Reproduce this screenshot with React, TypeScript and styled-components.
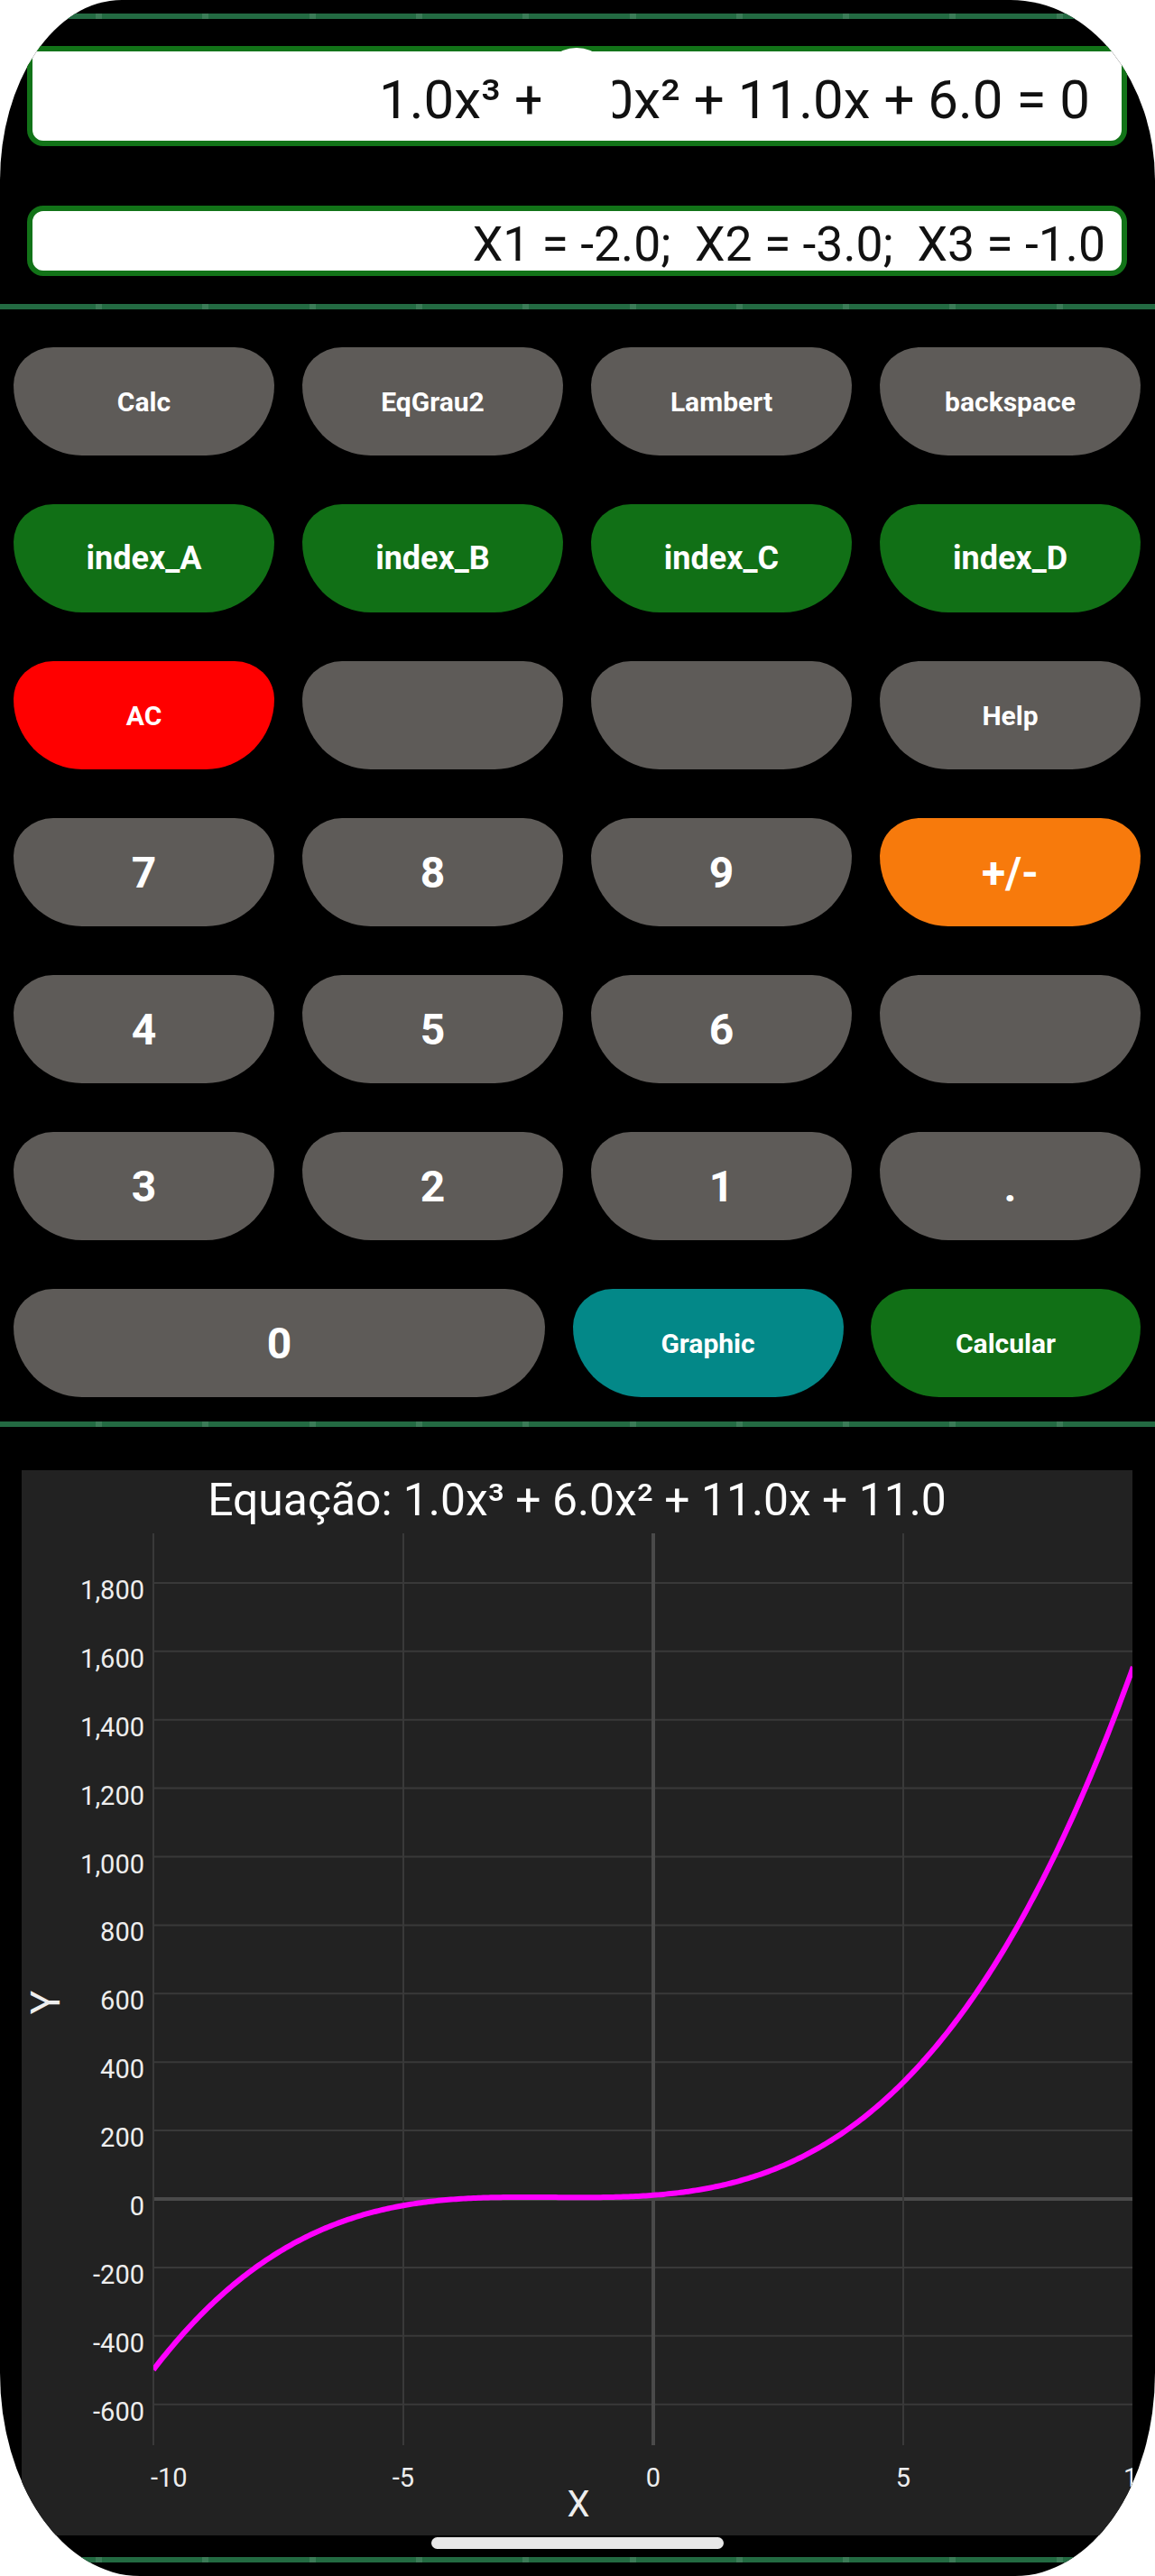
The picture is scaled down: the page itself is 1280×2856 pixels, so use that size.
import React from "react";
import styled, { createGlobalStyle } from "styled-components";

const Global = createGlobalStyle`
  html, body { margin: 0; padding: 0; background: #ffffff; }
  body { font-family: Roboto, "Liberation Sans", Arial, sans-serif; }
  * { box-sizing: border-box; }
`;

const Screen = styled.div`
  position: relative;
  width: 1280px;
  height: 2856px;
  background: #000;
  overflow: hidden;
  border-radius: 135px 160px 155px 155px / 200px 200px 225px 225px;
  display: flex;
  flex-direction: column;
`;

const Stripe = styled.div<{ $mt: number }>`
  flex: none;
  height: 6px;
  margin-top: ${(p) => p.$mt}px;
  background: repeating-linear-gradient(
    90deg,
    #236a42 0px,
    #236a42 106px,
    #3b7b57 106px,
    #3b7b57 113px,
    #236a42 113px,
    #236a42 118.3px
  );
`;

const StatusBar = styled.div`
  flex: none;
  height: 51px;
  display: flex;
  flex-direction: column;
`;

const EquationBox = styled.div`
  flex: none;
  margin: 0 31px 0 30px;
  height: 111px;
  background: #fff;
  border: 6px solid #127318;
  border-radius: 0 0 18px 18px;
  display: flex;
  align-items: center;
  justify-content: flex-end;
  padding: 7px 35px 0 0;
  font-size: 60px;
  color: #111;
  white-space: pre;
  overflow: hidden;
`;

const ResultBox = styled.div`
  flex: none;
  margin: 66px 31px 0 30px;
  height: 78px;
  background: #fff;
  border: 6px solid #127318;
  border-radius: 18px;
  display: flex;
  align-items: center;
  justify-content: flex-end;
  padding: 6px 18px 0 0;
  font-size: 53.5px;
  color: #111;
  white-space: pre;
  overflow: hidden;
`;

const CameraCutout = styled.div`
  position: absolute;
  left: 599px;
  top: 53px;
  width: 80px;
  height: 100px;
  background: #fff;
  border-radius: 40px 40px 0 0;
`;

const Keypad = styled.div`
  flex: none;
  margin-top: 42px;
  padding: 0 16px 0 15px;
  display: grid;
  grid-template-columns: repeat(4, 1fr);
  grid-auto-rows: 120px;
  column-gap: 31px;
  row-gap: 54px;
`;

const LastRow = styled.div`
  grid-column: 1 / -1;
  display: flex;
  justify-content: space-between;
`;

type Tone = "grey" | "green" | "red" | "orange" | "teal";
type Size = "sm" | "md" | "lg";

const toneColor: Record<Tone, string> = {
  grey: "#5e5b58",
  green: "#117016",
  red: "#ff0000",
  orange: "#f77a0c",
  teal: "#038888",
};

const sizePx: Record<Size, number> = { sm: 30, md: 36, lg: 48 };

const Key = styled.button<{ $tone: Tone; $size: Size; $w?: number }>`
  border: none;
  padding: 0;
  margin: 0;
  height: 120px;
  ${(p) => (p.$w ? `width: ${p.$w}px; flex: none;` : "width: 100%;")}
  background: ${(p) => toneColor[p.$tone]};
  color: #fff;
  font-family: Roboto, "Liberation Sans", Arial, sans-serif;
  font-weight: 700;
  font-size: ${(p) => sizePx[p.$size]}px;
  border-radius: 44px 44px 76px 76px / 42px 42px 78px 78px;
  display: flex;
  align-items: center;
  justify-content: center;
  cursor: pointer;
`;

const ChartPanel = styled.div`
  flex: none;
  margin: 48px 0 0 24px;
  width: 1231px;
  height: 1181px;
  background: #222222;
  display: flex;
  flex-direction: column;
  overflow: hidden;
`;

const ChartTitle = styled.div`
  flex: none;
  height: 70px;
  line-height: 66px;
  text-align: center;
  color: #fff;
  font-size: 49.8px;
  white-space: nowrap;
`;

const PlotSvg = styled.svg`
  flex: none;
  display: block;
  overflow: hidden;
`;

const HomeIndicator = styled.div`
  flex: none;
  align-self: center;
  margin-top: 2px;
  width: 324px;
  height: 13px;
  border-radius: 7px;
  background: #e8e8e8;
`;

type KeyDef = { label: string; tone: Tone; size: Size };

const keys: KeyDef[] = [
  { label: "Calc", tone: "grey", size: "sm" },
  { label: "EqGrau2", tone: "grey", size: "sm" },
  { label: "Lambert", tone: "grey", size: "sm" },
  { label: "backspace", tone: "grey", size: "sm" },
  { label: "index_A", tone: "green", size: "md" },
  { label: "index_B", tone: "green", size: "md" },
  { label: "index_C", tone: "green", size: "md" },
  { label: "index_D", tone: "green", size: "md" },
  { label: "AC", tone: "red", size: "sm" },
  { label: "", tone: "grey", size: "sm" },
  { label: "", tone: "grey", size: "sm" },
  { label: "Help", tone: "grey", size: "sm" },
  { label: "7", tone: "grey", size: "lg" },
  { label: "8", tone: "grey", size: "lg" },
  { label: "9", tone: "grey", size: "lg" },
  { label: "+/-", tone: "orange", size: "lg" },
  { label: "4", tone: "grey", size: "lg" },
  { label: "5", tone: "grey", size: "lg" },
  { label: "6", tone: "grey", size: "lg" },
  { label: "", tone: "grey", size: "lg" },
  { label: "3", tone: "grey", size: "lg" },
  { label: "2", tone: "grey", size: "lg" },
  { label: "1", tone: "grey", size: "lg" },
  { label: ".", tone: "grey", size: "lg" },
];

// plot geometry (svg coords, svg placed below the 70px title)
const W = 1231;
const H = 1111;
const PLOT_L = 146;
const PLOT_B = 1011;
const X = (v: number) => 700 + 55.4 * v;
const Y = (v: number) => 738 - 0.3795 * v;
const f = (x: number) => x * x * x + 6 * x * x + 11 * x + 11;

const curvePath = (() => {
  const pts: string[] = [];
  const end = (W - 700) / 55.4 + 0.05;
  for (let x = -10; x <= end; x += 0.05) {
    pts.push(`${X(x).toFixed(2)},${Y(f(x)).toFixed(2)}`);
  }
  return "M" + pts.join(" L");
})();

const yTicks = [1800, 1600, 1400, 1200, 1000, 800, 600, 400, 200, 0, -200, -400, -600];
const xTicks = [-10, -5, 0, 5];

const fmt = (n: number) => n.toLocaleString("en-US");

const Plot: React.FC = () => (
  <PlotSvg width={W} height={H} viewBox={`0 0 ${W} ${H}`}>
    <defs>
      <clipPath id="plotClip">
        <rect x={PLOT_L} y={0} width={W - PLOT_L} height={PLOT_B} />
      </clipPath>
    </defs>
    {yTicks.map((v) => (
      <line
        key={"h" + v}
        x1={PLOT_L}
        x2={W}
        y1={Y(v)}
        y2={Y(v)}
        stroke={v === 0 ? "#4a4a4a" : "#393939"}
        strokeWidth={v === 0 ? 4 : 2}
      />
    ))}
    {xTicks.map((v) => (
      <line
        key={"v" + v}
        x1={X(v)}
        x2={X(v)}
        y1={0}
        y2={PLOT_B}
        stroke={v === 0 ? "#4a4a4a" : "#393939"}
        strokeWidth={v === 0 ? 4 : 2}
      />
    ))}
    <path
      d={curvePath}
      fill="none"
      stroke="#ff00ff"
      strokeWidth={6}
      clipPath="url(#plotClip)"
    />
    <g fill="#eeeeee" fontSize={29} fontFamily="Roboto, 'Liberation Sans', sans-serif">
      {yTicks.map((v) => (
        <text key={"yl" + v} x={136} y={Y(v) + 18} textAnchor="end">
          {fmt(v)}
        </text>
      ))}
      <text x={143} y={1057} textAnchor="start">-10</text>
      <text x={X(-5)} y={1057} textAnchor="middle">-5</text>
      <text x={X(0)} y={1057} textAnchor="middle">0</text>
      <text x={X(5)} y={1057} textAnchor="middle">5</text>
      <text x={1221} y={1057} textAnchor="start">10</text>
    </g>
    <text
      x={617}
      y={1090}
      textAnchor="middle"
      fill="#eeeeee"
      fontSize={40}
      fontFamily="Roboto, 'Liberation Sans', sans-serif"
    >
      X
    </text>
    <text
      x={0}
      y={0}
      transform="translate(42 520) rotate(-90)"
      textAnchor="middle"
      fill="#eeeeee"
      fontSize={44}
      fontFamily="Roboto, 'Liberation Sans', sans-serif"
    >
      Y
    </text>
  </PlotSvg>
);

export default function App() {
  return (
    <>
      <Global />
      <Screen>
        <StatusBar>
          <Stripe $mt={15} />
        </StatusBar>
        <EquationBox>{"1.0x³ + 6.0x² + 11.0x + 6.0 = 0"}</EquationBox>
        <ResultBox>{"X1 = -2.0;  X2 = -3.0;  X3 = -1.0"}</ResultBox>
        <Stripe $mt={31} />
        <Keypad>
          {keys.map((k, i) => (
            <Key key={i} $tone={k.tone} $size={k.size}>
              {k.label}
            </Key>
          ))}
          <LastRow>
            <Key $tone="grey" $size="lg" $w={589}>0</Key>
            <Key $tone="teal" $size="sm" $w={300}>Graphic</Key>
            <Key $tone="green" $size="sm" $w={299}>Calcular</Key>
          </LastRow>
        </Keypad>
        <Stripe $mt={27} />
        <ChartPanel>
          <ChartTitle>Equação: 1.0x³ + 6.0x² + 11.0x + 11.0</ChartTitle>
          <Plot />
        </ChartPanel>
        <HomeIndicator />
        <Stripe $mt={9} />
        <CameraCutout />
      </Screen>
    </>
  );
}
